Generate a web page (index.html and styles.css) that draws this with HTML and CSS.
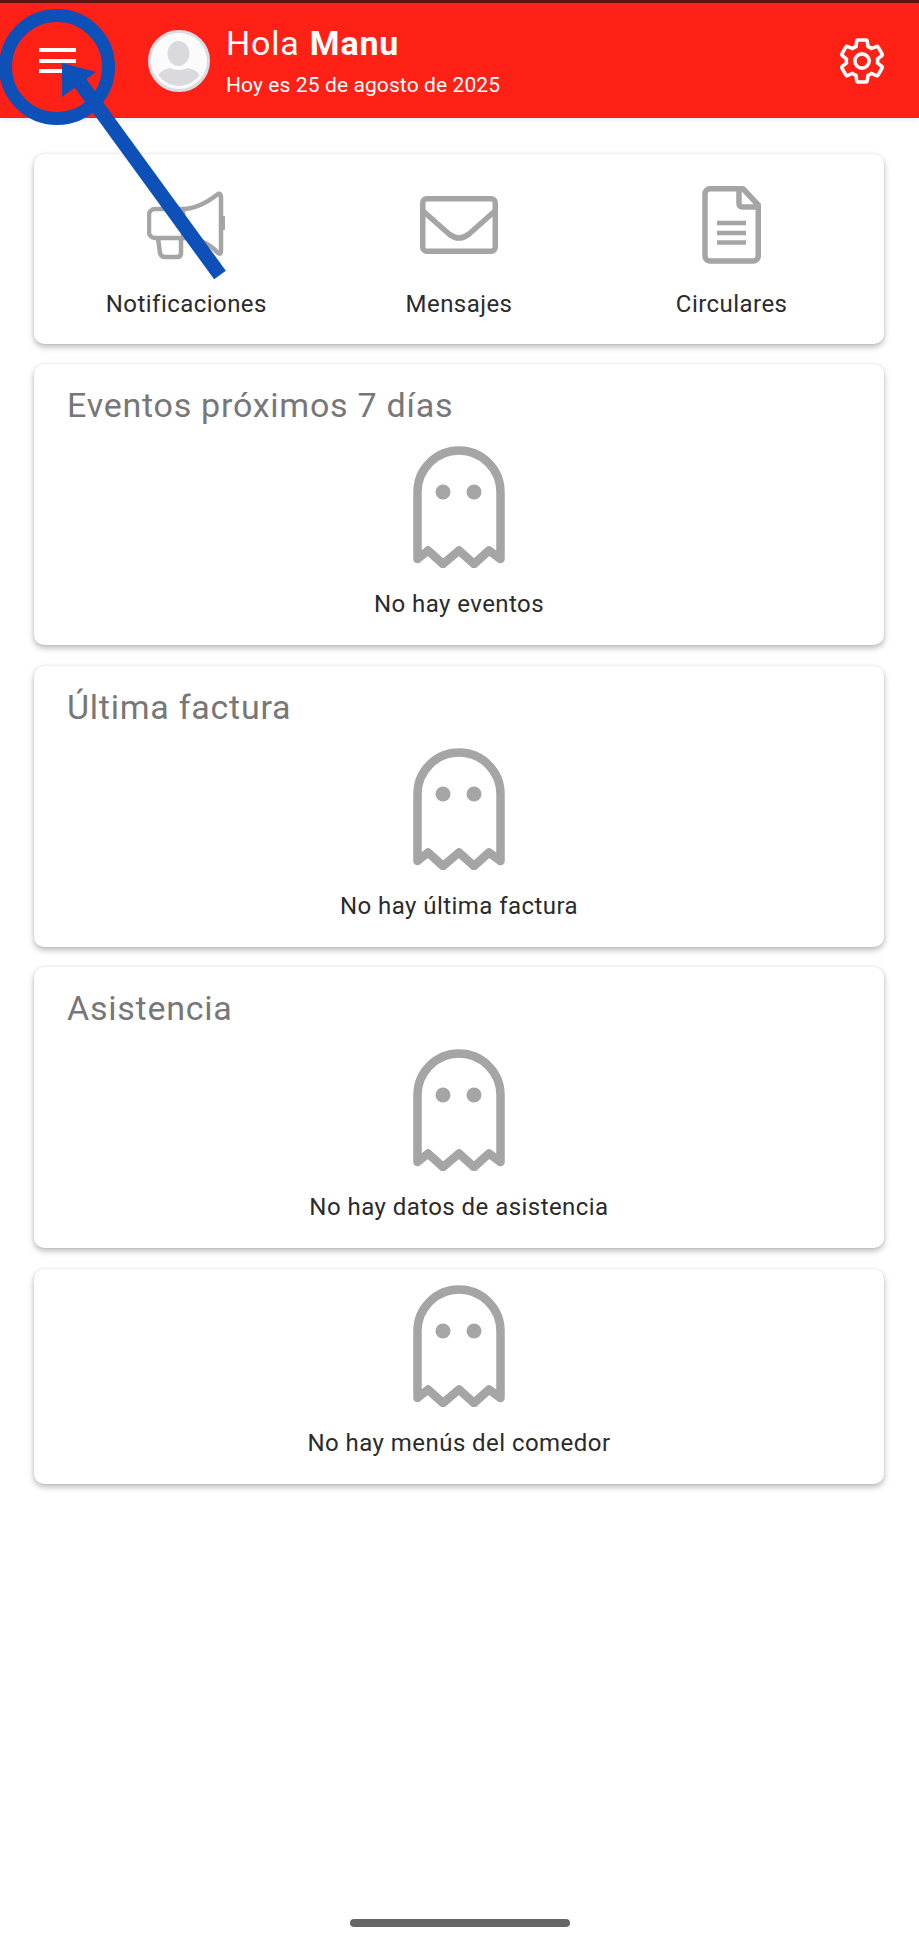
FILE: index.html
```html
<!DOCTYPE html>
<html lang="es">
<head>
  <meta charset="UTF-8">
  <meta name="viewport" content="width=device-width, initial-scale=1.0">
  <title>Inicio</title>
  <link rel="stylesheet" href="styles.css">
</head>
<body>

  <header class="topbar">
    <div class="menu-btn">
      <span></span>
      <span></span>
      <span></span>
    </div>
    <svg class="avatar" viewBox="0 0 62 62">
      <circle cx="31" cy="31" r="29.5" fill="#fbfbfc" stroke="#d5dde5" stroke-width="3"/>
      <ellipse cx="30.5" cy="23.5" rx="11" ry="12.5" fill="#d9d9de"/>
      <path d="M11 46 C11 42 15 40 22 38 Q31 42 40 38 C47 40 51 42 51 46 A25 25 0 0 1 11 46 Z" fill="#d9d9de"/>
    </svg>
    <div class="greeting">
      <div class="hello">Hola <strong>Manu</strong></div>
      <div class="today">Hoy es 25 de agosto de 2025</div>
    </div>
    <svg class="gear" viewBox="1 1 22 22">
      <path d="M19.43 12.98c.04-.32.07-.64.07-.98 0-.34-.03-.66-.07-.98l2.11-1.65c.19-.15.24-.42.12-.64l-2-3.46c-.12-.22-.39-.3-.61-.22l-2.49 1c-.52-.4-1.08-.73-1.69-.98l-.38-2.65C14.46 2.18 14.25 2 14 2h-4c-.25 0-.46.18-.49.42l-.38 2.65c-.61.25-1.17.59-1.69.98l-2.49-1c-.23-.09-.49 0-.61.22l-2 3.46c-.13.22-.07.49.12.64l2.11 1.65c-.04.32-.07.65-.07.98 0 .33.03.66.07.98l-2.11 1.65c-.19.15-.24.42-.12.64l2 3.46c.12.22.39.3.61.22l2.49-1c.52.4 1.08.73 1.69.98l.38 2.65c.03.24.24.42.49.42h4c.25 0 .46-.18.49-.42l.38-2.65c.61-.25 1.17-.59 1.69-.98l2.49 1c.23.09.49 0 .61-.22l2-3.46c.12-.22.07-.49-.12-.64l-2.11-1.65z" fill="none" stroke="#fff" stroke-width="1.7"/>
      <circle cx="12" cy="12" r="3.4" fill="none" stroke="#fff" stroke-width="1.7"/>
    </svg>
  </header>

  <main class="content">
    <section class="card shortcuts">
      <div class="shortcut">
        <div class="shortcut-icon">
          <svg width="78" height="69" viewBox="0 0 78 69" fill="none" stroke="#a5a5a5" stroke-width="4.5" stroke-linejoin="round">
            <path d="M36 18 H8 a6 6 0 0 0 -6 6 V41 a6 6 0 0 0 6 6 H36 Z"/>
            <path d="M36 18 C50 18 62 10 71 3 Q74 2 74 6 V60 Q74 64 71 62 C62 52 50 47 36 47"/>
            <path d="M11 47 L13 62 Q14 66 18 66 H30 Q34 66 34 62 V47"/>
            <path d="M76 25 A7 7 0 0 1 76 39 Z" fill="#a5a5a5" stroke="none"/>
          </svg>
        </div>
        <div class="shortcut-label">Notificaciones</div>
      </div>
      <div class="shortcut">
        <div class="shortcut-icon">
          <svg width="78" height="58" viewBox="0 0 78 58" fill="none" stroke="#a5a5a5" stroke-width="5.5" stroke-linejoin="round">
            <rect x="2.75" y="2.75" width="72.5" height="52.5" rx="4"/>
            <path d="M3 15 L29 38 Q39 46 49 38 L75 15"/>
          </svg>
        </div>
        <div class="shortcut-label">Mensajes</div>
      </div>
      <div class="shortcut">
        <div class="shortcut-icon">
          <svg width="59" height="78" viewBox="0 0 59 78" fill="none" stroke="#a5a5a5" stroke-width="5.5" stroke-linejoin="round">
            <path d="M8 2.75 H41 L56.25 19 V70 a5 5 0 0 1 -5 5 H8 a5 5 0 0 1 -5 -5 V7.75 a5 5 0 0 1 5 -5 Z"/>
            <path d="M37 3 V18 a3 3 0 0 0 3 3 H56"/>
            <path d="M15 37 H44 M15 47 H44 M15 56.5 H44" stroke-width="4.5"/>
          </svg>
        </div>
        <div class="shortcut-label">Circulares</div>
      </div>
    </section>

    <section class="card panel">
      <h2 class="panel-title">Eventos próximos 7 días</h2>
      <svg class="ghost" viewBox="0 0 92 122" fill="none" stroke="#a5a5a5" stroke-width="8.5" stroke-linecap="round" stroke-linejoin="round">
        <path d="M4.5 113 V46 A41.5 41.5 0 0 1 87.5 46 V113 L76 104.5 L61 118 L46 104.5 L30 118 L15 104.5 L4.5 113"/>
        <circle cx="30" cy="46" r="7.5" fill="#a5a5a5" stroke="none"/>
        <circle cx="61" cy="46" r="7.5" fill="#a5a5a5" stroke="none"/>
      </svg>
      <p class="empty-text">No hay eventos</p>
    </section>

    <section class="card panel">
      <h2 class="panel-title">Última factura</h2>
      <svg class="ghost" viewBox="0 0 92 122" fill="none" stroke="#a5a5a5" stroke-width="8.5" stroke-linecap="round" stroke-linejoin="round">
        <path d="M4.5 113 V46 A41.5 41.5 0 0 1 87.5 46 V113 L76 104.5 L61 118 L46 104.5 L30 118 L15 104.5 L4.5 113"/>
        <circle cx="30" cy="46" r="7.5" fill="#a5a5a5" stroke="none"/>
        <circle cx="61" cy="46" r="7.5" fill="#a5a5a5" stroke="none"/>
      </svg>
      <p class="empty-text">No hay última factura</p>
    </section>

    <section class="card panel">
      <h2 class="panel-title">Asistencia</h2>
      <svg class="ghost" viewBox="0 0 92 122" fill="none" stroke="#a5a5a5" stroke-width="8.5" stroke-linecap="round" stroke-linejoin="round">
        <path d="M4.5 113 V46 A41.5 41.5 0 0 1 87.5 46 V113 L76 104.5 L61 118 L46 104.5 L30 118 L15 104.5 L4.5 113"/>
        <circle cx="30" cy="46" r="7.5" fill="#a5a5a5" stroke="none"/>
        <circle cx="61" cy="46" r="7.5" fill="#a5a5a5" stroke="none"/>
      </svg>
      <p class="empty-text">No hay datos de asistencia</p>
    </section>

    <section class="card panel no-title">
      <svg class="ghost" viewBox="0 0 92 122" fill="none" stroke="#a5a5a5" stroke-width="8.5" stroke-linecap="round" stroke-linejoin="round">
        <path d="M4.5 113 V46 A41.5 41.5 0 0 1 87.5 46 V113 L76 104.5 L61 118 L46 104.5 L30 118 L15 104.5 L4.5 113"/>
        <circle cx="30" cy="46" r="7.5" fill="#a5a5a5" stroke="none"/>
        <circle cx="61" cy="46" r="7.5" fill="#a5a5a5" stroke="none"/>
      </svg>
      <p class="empty-text">No hay menús del comedor</p>
    </section>
  </main>

  <div class="home-bar"></div>

  <!-- blue ring and arrow pointing at the menu button -->
  <svg class="callout" width="240" height="290" viewBox="0 0 240 290">
    <circle cx="57" cy="67" r="51.5" fill="none" stroke="#0d50b8" stroke-width="13"/>
    <path d="M220 275 L78 80" fill="none" stroke="#0d50b8" stroke-width="14.5"/>
    <path d="M62 63 L96 72 L62 97 Z" fill="#0d50b8"/>
  </svg>

</body>
</html>
```

FILE: styles.css
```css
body {
  margin: 0;
  min-height: 100vh;
  display: flex;
  flex-direction: column;
  background-color: #fff;
  font-family: Roboto, "Liberation Sans", sans-serif;
  color: #2b2b2b;
}

/* Red top bar */
.topbar {
  box-sizing: border-box;
  height: 118px;
  display: flex;
  align-items: center;
  padding: 0 34px 0 39px;
  background-color: #ff2016;
  border-top: 3px solid #5c1410;
  box-shadow: 0 2px 5px rgba(0, 0, 0, 0.08);
  color: #fff;
}

.menu-btn {
  width: 37px;
  display: flex;
  flex-direction: column;
  gap: 6.5px;
  margin-right: 72px;
}

.menu-btn span {
  height: 4px;
  background-color: #fff;
}

.avatar {
  width: 62px;
  height: 62px;
  margin-right: 16px;
}

.greeting {
  flex: 1;
}

.hello {
  font-size: 34px;
  line-height: 38px;
  letter-spacing: 0.8px;
  word-spacing: 1px;
}

.today {
  font-size: 21px;
  line-height: 26px;
  margin-top: 10px;
  letter-spacing: 0.1px;
}

.gear {
  width: 46px;
  height: 46px;
}

/* Cards */
.content {
  display: flex;
  flex-direction: column;
  gap: 20.4px;
  padding: 36px 35px 0 34px;
}

.card {
  background-color: #fff;
  border-radius: 10px;
  box-shadow: 0 3px 6px rgba(0, 0, 0, 0.28), 0 0 2px rgba(0, 0, 0, 0.1);
}

.shortcuts {
  display: grid;
  grid-template-columns: repeat(3, 1fr);
  height: 190px;
  box-sizing: border-box;
  padding: 32px 16px 0;
}

.shortcut {
  text-align: center;
}

.shortcut-icon {
  height: 78px;
  display: flex;
  align-items: center;
  justify-content: center;
}

.shortcut-label {
  font-size: 24px;
  line-height: 28px;
  margin-top: 26px;
  letter-spacing: 0.45px;
}

.panel {
  display: flex;
  flex-direction: column;
  align-items: center;
  padding-top: 21px;
}

.panel.no-title {
  padding-top: 16px;
}

.panel-title {
  align-self: flex-start;
  margin: 0 0 21px 33px;
  font-size: 34px;
  line-height: 40px;
  font-weight: 400;
  color: #777;
  letter-spacing: 0.75px;
}

.ghost {
  width: 92px;
  height: 122px;
  display: block;
}

.empty-text {
  margin: 22px 0 27px;
  font-size: 24px;
  line-height: 28px;
  letter-spacing: 0.45px;
}

.home-bar {
  width: 220px;
  height: 8px;
  margin: auto auto 21px;
  border-radius: 4px;
  background-color: #666;
}

.callout {
  position: absolute;
  top: 0;
  left: 0;
}
```
